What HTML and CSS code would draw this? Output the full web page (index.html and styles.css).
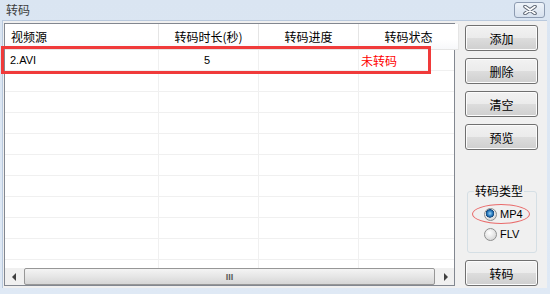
FILE: index.html
```html
<!DOCTYPE html>
<html lang="zh">
  <head>
    <meta charset="UTF-8" />
    <title>转码</title>
    <link rel="stylesheet" href="styles.css">
  </head>
  <body>
    <div class="window">
      <div class="titlebar">
        <span class="title">转码</span>
        <div class="close">
          <svg width="14" height="10" viewBox="0 0 14 10">
            <path d="M2 1.5 L12 8.5 M12 1.5 L2 8.5" stroke="#5b6472" stroke-width="3.6" stroke-linecap="round" />
            <path d="M2 1.5 L12 8.5 M12 1.5 L2 8.5" stroke="#ffffff" stroke-width="1.6" stroke-linecap="round" />
          </svg>
        </div>
      </div>

      <div class="client">
        <div class="list">
          <div class="list-head">
            <div class="hcell left">视频源</div>
            <div class="hcell">转码时长(秒)</div>
            <div class="hcell">转码进度</div>
            <div class="hcell">转码状态</div>
          </div>
          <div class="list-body">
            <div class="row">
              <div class="cell name">2.AVI</div>
              <div class="cell num">5</div>
              <div class="cell"></div>
              <div class="cell status">未转码</div>
            </div>
            <div class="row"><div class="cell"></div><div class="cell"></div><div class="cell"></div><div class="cell"></div></div>
            <div class="row"><div class="cell"></div><div class="cell"></div><div class="cell"></div><div class="cell"></div></div>
            <div class="row"><div class="cell"></div><div class="cell"></div><div class="cell"></div><div class="cell"></div></div>
            <div class="row"><div class="cell"></div><div class="cell"></div><div class="cell"></div><div class="cell"></div></div>
            <div class="row"><div class="cell"></div><div class="cell"></div><div class="cell"></div><div class="cell"></div></div>
            <div class="row"><div class="cell"></div><div class="cell"></div><div class="cell"></div><div class="cell"></div></div>
            <div class="row"><div class="cell"></div><div class="cell"></div><div class="cell"></div><div class="cell"></div></div>
            <div class="row"><div class="cell"></div><div class="cell"></div><div class="cell"></div><div class="cell"></div></div>
            <div class="row"><div class="cell"></div><div class="cell"></div><div class="cell"></div><div class="cell"></div></div>
            <div class="row"><div class="cell"></div><div class="cell"></div><div class="cell"></div><div class="cell"></div></div>
          </div>
          <div class="hscroll">
            <div class="arrow"><span class="tri-left"></span></div>
            <div class="thumb"><span class="grip">III</span></div>
            <div class="arrow"><span class="tri-right"></span></div>
          </div>
          <div class="mark"></div>
        </div>

        <div class="side">
          <button class="btn">添加</button>
          <button class="btn">删除</button>
          <button class="btn">清空</button>
          <button class="btn">预览</button>

          <fieldset class="group">
            <legend>转码类型</legend>
            <label class="radio"><span class="dot on"></span>MP4<span class="ring"></span></label>
            <label class="radio"><span class="dot"></span>FLV</label>
          </fieldset>

          <button class="btn last">转码</button>
        </div>
      </div>
    </div>
  </body>
</html>
```

FILE: styles.css
```css
* {
  margin: 0;
  padding: 0;
  box-sizing: border-box;
}

body {
  width: 550px;
  height: 294px;
  overflow: hidden;
  font-family: "Noto Sans CJK SC", "Liberation Sans", sans-serif;
  font-size: 12px;
  color: #000;
  background: linear-gradient(#dae5f2, #dfe9f5);
}

.window {
  display: flex;
  flex-direction: column;
  height: 294px;
  padding-bottom: 6px;
}

.titlebar {
  height: 20px;
  display: flex;
  align-items: flex-start;
  justify-content: space-between;
  padding: 0 5px 0 6px;
}

.title {
  line-height: 20px;
  color: #3c3c3c;
}

.close {
  margin-top: 2px;
  width: 31px;
  height: 16px;
  border: 1px solid #8d9bb1;
  border-radius: 3px;
  background: linear-gradient(#eef3f9, #d7e1ee);
  display: flex;
  align-items: center;
  justify-content: center;
}

.client {
  flex: 1;
  display: flex;
  margin: 0 3px 0 2px;
  padding: 3px 0 0 1px;
  background: #f0f0f0;
  border-top: 1px solid #b9c9dd;
  border-left: 1px solid #b9c9dd;
}

/* list view */

.list {
  position: relative;
  width: 451px;
  height: 263px;
  margin-top: -1px;
  border: 1px solid #828790;
  background: #fff;
  display: flex;
  flex-direction: column;
}

.list-head,
.row {
  display: grid;
  grid-template-columns: 154px 100px 100px 100px;
  width: 454px;
}

.list-head {
  height: 26px;
  border-bottom: 1px solid #e5e5e5;
  background: linear-gradient(#ffffff 60%, #f7f8fa);
}

.hcell {
  border-right: 1px solid #e5e5e5;
  text-align: center;
  line-height: 25px;
}

.hcell.left {
  text-align: left;
  padding-left: 6px;
}

.list-body {
  flex: 1;
  overflow: hidden;
}

.row {
  height: 21px;
  border-bottom: 1px solid #f0f0f0;
}

.cell {
  border-right: 1px solid #f0f0f0;
  line-height: 21px;
  font-family: "Liberation Sans", sans-serif;
  font-size: 11px;
}

.cell.name {
  padding-left: 5px;
}

.cell.num {
  text-align: center;
  padding-right: 3px;
}

.cell.status {
  font-family: "Noto Sans CJK SC", sans-serif;
  font-size: 12px;
  color: #ff0000;
  padding-left: 2px;
}

.mark {
  position: absolute;
  left: -4px;
  top: 22px;
  width: 430px;
  height: 28px;
  border: 3px solid #f03a3a;
}

/* horizontal scrollbar */

.hscroll {
  height: 17px;
  display: flex;
  background: #f0f0f0;
}

.arrow {
  width: 17px;
  display: flex;
  align-items: center;
  justify-content: center;
}

.tri-left {
  border-top: 4px solid transparent;
  border-bottom: 4px solid transparent;
  border-right: 4px solid #404040;
}

.tri-right {
  border-top: 4px solid transparent;
  border-bottom: 4px solid transparent;
  border-left: 4px solid #404040;
}

.thumb {
  flex: 1;
  margin: 0 2px;
  border: 1px solid #979797;
  border-radius: 2px;
  background: linear-gradient(#f4f4f4, #e6e6e6 50%, #d6d6d6);
  display: flex;
  align-items: center;
  justify-content: center;
}

.grip {
  font-family: "Liberation Sans", sans-serif;
  font-size: 9px;
  font-weight: bold;
  color: #5a5a5a;
}

/* right column */

.side {
  width: 73px;
  margin-left: 10px;
  padding: 1px 0 0;
  height: 262px;
  display: flex;
  flex-direction: column;
}

.btn {
  height: 26px;
  margin-bottom: 7px;
  border: 1px solid #707070;
  border-radius: 3px;
  background: linear-gradient(#f2f2f2, #ebebeb 50%, #dddddd 50%, #cfcfcf);
  font-family: "Noto Sans CJK SC", sans-serif;
  font-size: 12px;
  color: #000;
  box-shadow: inset 0 0 0 1px #fcfcfc;
}

.btn.last {
  margin-bottom: 0;
}

.group {
  margin: auto 1px 7px 2px;
  border: 1px solid #d5dfe5;
  border-radius: 3px;
  padding: 5px 0 8px;
}

.group legend {
  margin-left: 6px;
  padding: 0 1px;
  line-height: 16px;
  white-space: nowrap;
}

.radio {
  position: relative;
  display: flex;
  align-items: center;
  height: 20px;
  padding-left: 16px;
  font-family: "Liberation Sans", sans-serif;
  font-size: 11px;
}

.dot {
  width: 13px;
  height: 13px;
  margin-right: 3px;
  border: 1px solid #8e8f8f;
  border-radius: 50%;
  background: radial-gradient(circle at 40% 35%, #ffffff, #dcdcdc 70%, #c9c9c9);
}

.dot.on {
  background:
    radial-gradient(circle at 45% 40%, #9fd3f5 0, #2d7fc2 2.5px, #12467d 4px, transparent 4.5px),
    radial-gradient(circle at 40% 35%, #ffffff, #dcdcdc 70%, #c9c9c9);
}

.ring {
  position: absolute;
  left: 4px;
  top: 0;
  width: 58px;
  height: 20px;
  border: 1px solid #e96a6a;
  border-radius: 50%;
}
```
